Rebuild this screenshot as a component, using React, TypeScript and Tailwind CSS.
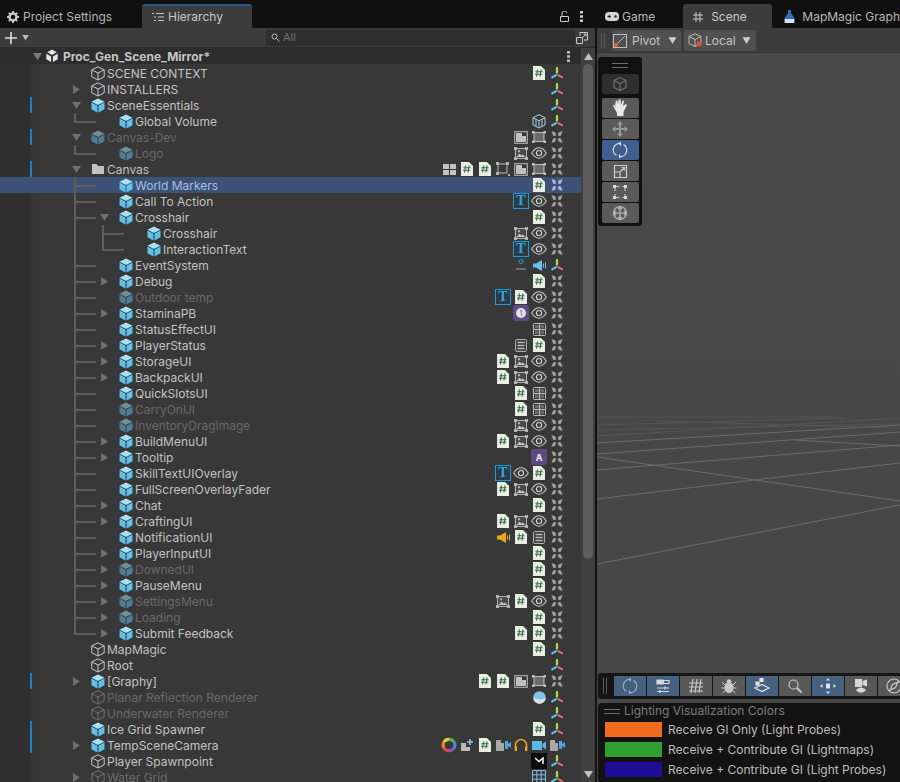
import { ReactNode } from 'react';

type Slot = keyof typeof slotIcons | null;

interface TreeRow {
    name: string;
    depth?: 0 | 1 | 2;
    arrow?: 'right' | 'down';
    icon?: 'box' | 'prefab' | 'folder';
    dim?: boolean;
    selected?: boolean;
    changed?: boolean;
    guide?: 'corner' | 'tee' | 'teeDeep' | 'cornerDeep';
    slots?: Slot[];
    gizmo?: 'color' | 'cross' | 'camera';
}

const Hash = () => (
    <svg width="12" height="14" viewBox="0 0 12 14">
        <path d="M0 0H8L12 4V14H0Z" fill="#e8eee4" />
        <path d="M4.5 3.5 3.5 10.5M8 3.5 7 10.5M2.3 5.7H9.6M2 8.3H9.3" stroke="#3f6b46" strokeWidth="1.1" fill="none" />
    </svg>
);
const Eye = () => (
    <svg width="16" height="12" viewBox="0 0 16 12">
        <path d="M.7 6C3 2.4 5.3.8 8 .8S13 2.4 15.3 6C13 9.6 10.7 11.2 8 11.2S3 9.6.7 6Z" fill="none" stroke="#c8c8c8" strokeWidth="1.1" />
        <circle cx="8" cy="6" r="2.6" fill="none" stroke="#c8c8c8" strokeWidth="1.3" />
    </svg>
);
const ImageIcon = () => (
    <svg width="14" height="13" viewBox="0 0 14 13">
        <rect x="1.5" y="1.5" width="11" height="10" fill="#4a4a4a" stroke="#b4b4b4" />
        <path d="M2.5 10 5.5 6.5 7.5 8.5 9 7.5 11.5 10Z" fill="#c0c0c0" />
        <circle cx="5" cy="4.3" r="1.1" fill="#c0c0c0" />
        <path d="M0 0H3V3H0ZM11 0H14V3H11ZM0 10H3V13H0ZM11 10H14V13H11Z" fill="#b4b4b4" />
    </svg>
);
const TextIcon = () => (
    <div className="flex h-4 w-4 items-center justify-center border border-[#1e9ad6] bg-[#2d3a42] font-['Liberation_Serif',serif] text-[14px] leading-none font-bold text-[#29a8e4]">
        T
    </div>
);
const GridIcon = () => (
    <svg width="13" height="13" viewBox="0 0 13 13" fill="none" stroke="#bcbcbc">
        <rect x=".5" y=".5" width="12" height="12" rx="1" />
        <path d="M6.500 1V12M1 6.500H12" strokeWidth="1.200" />
        <path d="M2 2H5.500V5.500H2ZM7.500 2H11V5.500H7.500ZM2 7.500H5.500V11H2ZM7.500 7.500H11V11H7.500Z" fill="#6a6a6a" stroke="none" />
    </svg>
);
const Tiles = () => (
    <svg width="13" height="11" viewBox="0 0 13 11">
        <path d="M0 0H6V5H0ZM7 0H13V5H7ZM0 6H6V11H0ZM7 6H13V11H7Z" fill="#c4c4c4" />
    </svg>
);
const RectTransform = () => (
    <svg width="14" height="14" viewBox="0 0 14 14">
        <path d="M2 2H11V11H2Z" fill="none" stroke="#c0c0c0" />
        <path d="M0 0H3V3H0ZM10 0H13V3H10ZM0 10H3V13H0ZM12 12H14V14H12Z" fill="#b4b4b4" />
    </svg>
);
const CanvasGroup = () => (
    <svg width="14" height="13" viewBox="0 0 14 13">
        <rect x=".7" y=".7" width="12.6" height="11.6" fill="none" stroke="#c0c0c0" />
        <path d="M2 2H8V5H12V11H2Z" fill="#c0c0c0" />
    </svg>
);
const CanvasRect = () => (
    <svg width="14" height="12" viewBox="0 0 14 12">
        <rect x="2" y="1.5" width="10" height="9" fill="#6a6a6a" stroke="#c0c0c0" />
        <path d="M0 0H2.5V2.5H0ZM11.5 0H14V2.5H11.5ZM0 9.500H2.5V12H0ZM11.5 9.500H14V12H11.5Z" fill="#c0c0c0" />
    </svg>
);
const ListIcon = () => (
    <svg width="12" height="13" viewBox="0 0 12 13">
        <rect x=".6" y=".6" width="10.800" height="11.800" rx="1" fill="none" stroke="#bcbcbc" />
        <path d="M2.500 3.500H9.500M2.500 6.500H9.500M2.500 9.500H9.500" stroke="#bcbcbc" strokeWidth="1.300" />
    </svg>
);
const PurpleClock = () => (
    <div className="flex h-4 w-4 items-center justify-center rounded-[2px] bg-[#5e4a7e]">
        <div className="flex h-[10px] w-[10px] items-center justify-center rounded-full bg-[#e4e4e4] text-[7px] leading-none text-[#5e4a7e]">
            1
        </div>
    </div>
);
const PurpleA = () => (
    <div className="flex h-4 w-4 items-center justify-center rounded-[2px] bg-[#5e4a7e] text-[9px] leading-none font-bold text-[#eeeeee]">
        A
    </div>
);
const Speaker = ({ color }: { color: string }) => (
    <svg width="15" height="13" viewBox="0 0 15 13">
        <path d="M1 4.500H4L10 1V12L4 8.500H1Z" fill={color} />
        <path d="M11.500 4.500V8.500M13.500 3.500V9.500" stroke={color} strokeWidth="1" />
    </svg>
);
const EventSystemIcon = () => (
    <svg width="14" height="14" viewBox="0 0 14 14">
        <circle cx="7" cy="3.500" r="2" fill="none" stroke="#2a86c8" strokeWidth="1.200" />
        <path d="M2 11H12" stroke="#6a6a6a" strokeWidth="2" />
    </svg>
);
const VolumeCube = () => (
    <svg width="14" height="15" viewBox="0 0 14 15" fill="none" stroke="#a9cfe4" strokeWidth="1">
        <path d="M7 .7 13 3.700V11L7 14 1 11V3.700Z" />
        <path d="M1 3.700 7 6.700 13 3.700M7 6.700V14M4 5V12.500M10 5V12.500" />
    </svg>
);
const Sphere = () => (
    <svg width="13" height="13" viewBox="0 0 13 13">
        <circle cx="6.500" cy="6.500" r="6.200" fill="#7fc7e8" />
        <path d="M.3 6.500C3 9 10 9 12.700 6.500A6.200 6.200 0 0 1 .3 6.500Z" fill="#e0e0e0" />
    </svg>
);
const ColorWheel = () => (
    <svg width="16" height="16" viewBox="0 0 16 16" fill="none" strokeWidth="3.200">
        <path d="M8 2.400A5.600 5.600 0 0 1 13 5" stroke="#58b34a" />
        <path d="M13 5A5.600 5.600 0 0 1 13 11" stroke="#3d8fd6" />
        <path d="M13 11A5.600 5.600 0 0 1 8 13.600" stroke="#8a58c8" />
        <path d="M8 13.600A5.600 5.600 0 0 1 3 11" stroke="#d8484a" />
        <path d="M3 11A5.600 5.600 0 0 1 3 5" stroke="#e8862e" />
        <path d="M3 5A5.600 5.600 0 0 1 8 2.400" stroke="#e8cf3a" />
    </svg>
);
const AddComponent = () => (
    <svg width="14" height="14" viewBox="0 0 14 14">
        <path d="M1 5H6V9H10V13H1Z" fill="#b8b8b8" />
        <path d="M10 1V7M7 4H13" stroke="#8cc8e8" strokeWidth="1.600" />
    </svg>
);
const ScriptCamera = () => (
    <svg width="15" height="13" viewBox="0 0 15 13">
        <path d="M0 1H5V4H8V12H0Z" fill="#a8a8a8" />
        <path d="M9 2H12V10H9ZM12 5 15 3V9L12 7Z" fill="#4ea6dc" />
    </svg>
);
const Headphones = () => (
    <svg width="14" height="14" viewBox="0 0 14 14" fill="none">
        <path d="M1.500 10V7A5.500 5.500 0 0 1 12.500 7V10" stroke="#e8aa1e" strokeWidth="1.500" />
        <path d="M.7 8.500H3V13H.7ZM11 8.500H13.300V13H11Z" fill="#e8aa1e" />
    </svg>
);
const CameraIcon = () => (
    <svg width="14" height="11" viewBox="0 0 14 11">
        <path d="M0 1H10V10H0ZM10.500 4 14 1.500V9.500L10.500 7Z" fill="#58b8e8" />
    </svg>
);
const SpawnBadge = () => (
    <div className="flex h-4 w-4 items-center justify-center bg-[#0c0c0c]">
        <svg width="10" height="8" viewBox="0 0 10 8">
            <path d="M1 1 5 4.500 9 1V7" fill="none" stroke="#f0f0f0" strokeWidth="1.600" />
        </svg>
    </div>
);
const BlueGrid = () => (
    <svg width="14" height="14" viewBox="0 0 14 14" fill="none" stroke="#7fbfe4">
        <path d="M.5.500H13.500V13.500H.5ZM4.800.500V13.500M9.200.500V13.500M.5 4.800H13.500M.5 9.200H13.500" />
    </svg>
);

const slotIcons = {
    hash: <Hash />,
    eye: <Eye />,
    image: <ImageIcon />,
    text: <TextIcon />,
    grid: <GridIcon />,
    tiles: <Tiles />,
    rect: <RectTransform />,
    group: <CanvasGroup />,
    canvas: <CanvasRect />,
    list: <ListIcon />,
    clock: <PurpleClock />,
    purpleA: <PurpleA />,
    speakerBlue: <Speaker color="#6cc0ea" />,
    speakerYellow: <Speaker color="#e8aa1e" />,
    events: <EventSystemIcon />,
    volume: <VolumeCube />,
    sphere: <Sphere />,
    wheel: <ColorWheel />,
    add: <AddComponent />,
    csCamera: <ScriptCamera />,
    headphones: <Headphones />,
    camera: <CameraIcon />,
    spawn: <SpawnBadge />,
    blueGrid: <BlueGrid />,
};

const rows: TreeRow[] = [
    { name: 'SCENE CONTEXT', icon: 'box', slots: ['hash'], gizmo: 'color' },
    { name: 'INSTALLERS', icon: 'box', arrow: 'right', gizmo: 'color' },
    { name: 'SceneEssentials', arrow: 'down', changed: true, gizmo: 'color' },
    { name: 'Global Volume', depth: 1, guide: 'corner', slots: ['volume'], gizmo: 'color' },
    { name: 'Canvas-Dev', arrow: 'down', dim: true, changed: true, slots: ['group', 'canvas'] },
    { name: 'Logo', depth: 1, dim: true, guide: 'corner', slots: ['image', 'eye'] },
    { name: 'Canvas', arrow: 'down', icon: 'folder', changed: true, slots: ['tiles', 'hash', 'hash', 'rect', 'group', 'canvas'] },
    { name: 'World Markers', depth: 1, guide: 'tee', selected: true, slots: ['hash'] },
    { name: 'Call To Action', depth: 1, guide: 'tee', slots: ['text', 'eye'] },
    { name: 'Crosshair', depth: 1, guide: 'tee', arrow: 'down', slots: ['hash'] },
    { name: 'Crosshair', depth: 2, guide: 'teeDeep', slots: ['image', 'eye'] },
    { name: 'InteractionText', depth: 2, guide: 'cornerDeep', slots: ['text', 'eye'] },
    { name: 'EventSystem', depth: 1, guide: 'tee', slots: ['events', 'speakerBlue'], gizmo: 'color' },
    { name: 'Debug', depth: 1, guide: 'tee', arrow: 'right', slots: ['hash'] },
    { name: 'Outdoor temp', depth: 1, guide: 'tee', dim: true, slots: ['text', 'hash', 'eye'] },
    { name: 'StaminaPB', depth: 1, guide: 'tee', arrow: 'right', slots: ['clock', 'eye'] },
    { name: 'StatusEffectUI', depth: 1, guide: 'tee', slots: ['grid'] },
    { name: 'PlayerStatus', depth: 1, guide: 'tee', arrow: 'right', slots: ['list', 'hash'] },
    { name: 'StorageUI', depth: 1, guide: 'tee', arrow: 'right', slots: ['hash', 'image', 'eye'] },
    { name: 'BackpackUI', depth: 1, guide: 'tee', arrow: 'right', slots: ['hash', 'image', 'eye'] },
    { name: 'QuickSlotsUI', depth: 1, guide: 'tee', slots: ['hash', 'grid'] },
    { name: 'CarryOnUI', depth: 1, guide: 'tee', dim: true, slots: ['hash', 'grid'] },
    { name: 'InventoryDragImage', depth: 1, guide: 'tee', dim: true, slots: ['image', 'eye'] },
    { name: 'BuildMenuUI', depth: 1, guide: 'tee', arrow: 'right', slots: ['hash', 'image', 'eye'] },
    { name: 'Tooltip', depth: 1, guide: 'tee', arrow: 'right', slots: ['purpleA'] },
    { name: 'SkillTextUIOverlay', depth: 1, guide: 'tee', slots: ['text', 'eye', 'hash'] },
    { name: 'FullScreenOverlayFader', depth: 1, guide: 'tee', slots: ['hash', 'image', 'eye'] },
    { name: 'Chat', depth: 1, guide: 'tee', arrow: 'right', slots: ['hash'] },
    { name: 'CraftingUI', depth: 1, guide: 'tee', arrow: 'right', slots: ['hash', 'image', 'eye'] },
    { name: 'NotificationUI', depth: 1, guide: 'tee', slots: ['speakerYellow', 'hash', 'list'] },
    { name: 'PlayerInputUI', depth: 1, guide: 'tee', arrow: 'right', slots: ['hash'] },
    { name: 'DownedUI', depth: 1, guide: 'tee', arrow: 'right', dim: true, slots: ['hash'] },
    { name: 'PauseMenu', depth: 1, guide: 'tee', arrow: 'right', slots: ['hash'] },
    { name: 'SettingsMenu', depth: 1, guide: 'tee', arrow: 'right', dim: true, slots: ['image', 'hash', 'eye'] },
    { name: 'Loading', depth: 1, guide: 'tee', arrow: 'right', dim: true, slots: ['hash'] },
    { name: 'Submit Feedback', depth: 1, guide: 'corner', arrow: 'right', slots: ['hash', 'hash'] },
    { name: 'MapMagic', icon: 'box', slots: ['hash'], gizmo: 'color' },
    { name: 'Root', icon: 'box', gizmo: 'color' },
    { name: '[Graphy]', arrow: 'right', changed: true, slots: ['hash', 'hash', 'group', 'canvas'] },
    { name: 'Planar Reflection Renderer', icon: 'box', dim: true, slots: ['sphere'], gizmo: 'color' },
    { name: 'Underwater Renderer', icon: 'box', dim: true, gizmo: 'color' },
    { name: 'Ice Grid Spawner', changed: true, slots: ['hash'], gizmo: 'color' },
    { name: 'TempSceneCamera', arrow: 'right', changed: true, slots: ['wheel', 'add', 'hash', 'csCamera', 'headphones', 'camera'], gizmo: 'camera' },
    { name: 'Player Spawnpoint', icon: 'box', slots: ['spawn'], gizmo: 'color' },
    { name: 'Water Grid', icon: 'box', arrow: 'right', dim: true, slots: ['blueGrid'], gizmo: 'color' },
];

const BoxIcon = ({ dim }: { dim?: boolean }) => (
    <svg width="14" height="15" viewBox="0 0 14 15" fill="none" stroke="#c9c9c9" strokeWidth="1" className={dim ? 'opacity-40' : ''}>
        <path d="M7 .8 13.200 3.800V10.800L7 14 .8 10.800V3.800Z" />
        <path d="M.8 3.800 7 7 13.200 3.800M7 7V14" />
    </svg>
);
const PrefabIcon = ({ dim }: { dim?: boolean }) => (
    <svg width="14" height="15" viewBox="0 0 14 15" className={dim ? 'opacity-50' : ''}>
        <path d="M7 .5 13.500 3.700 7 6.900.5 3.700Z" fill="#a6e2f8" />
        <path d="M.5 4.600 6.500 7.700V14.500L.5 11.200Z" fill="#5fc3ec" />
        <path d="M13.500 4.600 7.500 7.700V14.500L13.500 11.200Z" fill="#5fc3ec" />
    </svg>
);
const FolderIcon = () => (
    <svg width="14" height="12" viewBox="0 0 14 12">
        <path d="M1 1H5.500L7 3H13V11H1Z" fill="#c2c2c2" />
    </svg>
);
const ColorGizmo = () => (
    <svg width="14" height="15" viewBox="0 0 14 15" strokeLinecap="round" fill="none">
        <path d="M7 1.500V6.500M5.800 9.200 2.300 11.300M8.500 9.200 12 11.300" stroke="#2b2b2b" strokeWidth="4" opacity="0.45" />
        <path d="M7 2V6.500" stroke="#a8d84e" strokeWidth="2.400" />
        <path d="M5.800 9.200 2.300 11.300" stroke="#5cb8e6" strokeWidth="2.400" />
        <path d="M8.500 9.200 12 11.300" stroke="#d86464" strokeWidth="2.400" />
    </svg>
);
const CrossGizmo = ({ selected }: { selected?: boolean }) => (
    <svg width="14" height="14" viewBox="0 0 14 14" fill={selected ? '#a8bddb' : '#a4a4a4'}>
        <path d="M1.500 1 5.500 2.500 6 6 3 5.500ZM12.500 1 8.500 2.500 8 6 11 5.500ZM1.500 13 5.500 11.500 6 8 3 8.500ZM12.500 13 8.500 11.500 8 8 11 8.500Z" />
    </svg>
);

const Caret = ({ dir, className = '' }: { dir: 'right' | 'down' | 'up'; className?: string }) => {
    const d = dir === 'right' ? 'M1 0 8 4.500 1 9Z' : dir === 'down' ? 'M0 1H9L4.500 8Z' : 'M0 8H9L4.500 1Z';
    return (
        <svg width="9" height="9" viewBox="0 0 9 9" className={className}>
            <path d={d} fill="currentColor" />
        </svg>
    );
};

// Tree guide lines sit over the row, they don't take part in its flow
const Guide = ({ kind }: { kind: TreeRow['guide'] }) => {
    if (kind === 'corner')
        return (
            <>
                <span className="absolute top-0 left-[74px] h-[10px] w-[2px] bg-[#5e5e5e]" />
                <span className="absolute top-2 left-[74px] h-[2px] w-[22px] bg-[#5e5e5e]" />
            </>
        );
    if (kind === 'tee')
        return (
            <>
                <span className="absolute top-0 left-[74px] h-4 w-[2px] bg-[#5e5e5e]" />
                <span className="absolute top-2 left-[74px] h-[2px] w-[22px] bg-[#5e5e5e]" />
            </>
        );
    return (
        <>
            <span className="absolute top-0 left-[74px] h-4 w-[2px] bg-[#5e5e5e]" />
            <span className={`absolute top-0 left-[102px] w-[2px] bg-[#5e5e5e] ${kind === 'teeDeep' ? 'h-4' : 'h-[10px]'}`} />
            <span className="absolute top-2 left-[102px] h-[2px] w-[22px] bg-[#5e5e5e]" />
        </>
    );
};

const Row = ({ row }: { row: TreeRow }) => {
    const depth = row.depth ?? 0;
    const indent = depth === 0 ? 'pl-[72px]' : depth === 1 ? 'pl-[100px]' : 'pl-[128px]';
    const slots = row.slots ?? [];
    return (
        <div className={`relative flex h-4 shrink-0 items-center ${indent} ${row.selected ? 'bg-[#3c5277]' : ''}`}>
            {row.guide && <Guide kind={row.guide} />}
            {row.changed && <span className="absolute top-0 left-[30px] h-4 w-[2px] bg-[#1b80c4]" />}
            <div className="flex w-[19px] shrink-0 items-center text-[#6f6f6f]">
                {row.arrow && <Caret dir={row.arrow} />}
            </div>
            <div className="flex w-[14px] shrink-0 items-center justify-center">
                {row.icon === 'box' && <BoxIcon dim={row.dim} />}
                {row.icon === 'folder' && <FolderIcon />}
                {(!row.icon || row.icon === 'prefab') && <PrefabIcon dim={row.dim} />}
            </div>
            <span className={`mt-px ml-[2px] text-[12px] leading-4 whitespace-nowrap ${row.dim ? 'text-[#696969]' : row.selected ? 'text-[#a9bfe0]' : 'text-[#c2c2c2]'}`}>
                {row.name}
            </span>
            <div className="ml-auto flex items-center pr-[15px]">
                {slots.map((s, i) => (
                    <div key={i} className="flex h-4 w-[18px] items-center justify-center">
                        {s && slotIcons[s]}
                    </div>
                ))}
                <div className="flex h-4 w-[18px] items-center justify-center">
                    {row.gizmo === 'color' && <ColorGizmo />}
                    {row.gizmo === 'camera' && <ScriptCamera />}
                    {!row.gizmo && <CrossGizmo selected={row.selected} />}
                </div>
            </div>
        </div>
    );
};

const ToolButton = ({ active, children }: { active?: boolean; children: ReactNode }) => (
    <div className={`flex h-5 w-[37px] items-center justify-center rounded-[2px] ${active ? 'bg-[#3e5f8f]' : 'bg-[#5a5a5a]'}`}>
        {children}
    </div>
);

const Stroke = ({ children, color = '#d8d8d8' }: { children: ReactNode; color?: string }) => (
    <svg width="18" height="18" viewBox="0 0 18 18" fill="none" stroke={color} strokeWidth="1.200">
        {children}
    </svg>
);

const RotateGlyph = ({ color = '#e4e4e4' }: { color?: string }) => (
    <Stroke color={color}>
        <path d="M10 2.500A6.500 6.500 0 0 0 5.500 14.500M8 15.500A6.500 6.500 0 0 0 12.500 3.500" />
        <path d="M10 .5V5L7.500 2.500ZM8 17.500V13L10.500 15.500Z" fill={color} stroke="none" />
    </Stroke>
);

const BarButton = ({ active, children }: { active?: boolean; children: ReactNode }) => (
    <div className={`flex h-5 w-8 shrink-0 items-center justify-center ${active ? 'bg-[#46607f]' : 'bg-[#585858]'}`}>
        {children}
    </div>
);

const legend = [
    { label: 'Receive GI Only (Light Probes)', color: 'bg-[#ee6b1f]' },
    { label: 'Receive + Contribute GI (Lightmaps)', color: 'bg-[#2f9f30]' },
    { label: 'Receive + Contribute GI (Light Probes)', color: 'bg-[#200d96]' },
];

export default function App() {
    return (
        <div className="flex h-[782px] w-[900px] overflow-hidden bg-[#101010] font-['Inter',sans-serif] text-[12px] text-[#c4c4c4]">
            {/* Hierarchy panel */}
            <div className="flex w-[595px] shrink-0 flex-col">
                <div className="flex h-7 shrink-0 items-end bg-[#101010]">
                    <div className="flex h-6 w-[142px] items-center gap-[4px] pt-px pl-[7px] text-[#b4b4b4]">
                        <svg width="12" height="12" viewBox="0 0 12 12">
                            <circle cx="6" cy="6" r="3.500" fill="none" stroke="#c8c8c8" strokeWidth="2.400" />
                            <path d="M6 0V12M0 6H12M1.800 1.800 10.200 10.200M10.200 1.800 1.800 10.200" stroke="#c8c8c8" strokeWidth="1.800" strokeDasharray="2 8 2 0" />
                        </svg>
                        Project Settings
                    </div>
                    <div className="flex h-6 w-[110px] items-center gap-[4px] rounded-t-[3px] border-t-2 border-[#27588a] bg-[#3c3c3c] pl-[10px] text-[#c8c8c8]">
                        <svg width="12" height="10" viewBox="0 0 12 10" stroke="#c8c8c8">
                            <path d="M0 1.500H2M4 1.500H12M2 5H4M6 5H12M2 8.500H4M6 8.500H12" />
                        </svg>
                        Hierarchy
                    </div>
                    <div className="ml-auto flex h-6 items-center gap-[11px] pr-[12px]">
                        <svg width="9" height="11" viewBox="0 0 9 11" fill="none" stroke="#cccccc">
                            <path d="M.5 5.500H8.500V10.500H.5ZM2 5.500V3A2.500 2.500 0 0 1 7 2" />
                        </svg>
                        <svg width="3" height="11" viewBox="0 0 3 11" fill="#cccccc">
                            <path d="M0 0H3V2.500H0ZM0 4.200H3V6.700H0ZM0 8.400H3V11H0Z" />
                        </svg>
                    </div>
                </div>
                <div className="flex h-5 shrink-0 items-center border-b border-[#2a2a2a] bg-[#3c3c3c] pl-[5px]">
                    <svg width="12" height="12" viewBox="0 0 12 12" stroke="#dddddd" strokeWidth="1.600">
                        <path d="M6 0V12M0 6H12" />
                    </svg>
                    <Caret dir="down" className="ml-[4px] scale-75 text-[#bdbdbd]" />
                    <div className="ml-[236px] flex h-4 w-[309px] items-center gap-[3px] bg-[#2e2e2e] pl-[5px] text-[11px] text-[#737373]">
                        <svg width="9" height="9" viewBox="0 0 9 9" fill="none" stroke="#bdbdbd">
                            <circle cx="3.500" cy="3.500" r="2.500" />
                            <path d="M5.500 5.500 8.500 8.500" />
                        </svg>
                        All
                    </div>
                    <div className="ml-[1px] flex h-4 w-[16px] items-center">
                        <svg width="12" height="12" viewBox="0 0 12 12" fill="none" stroke="#c8c8c8">
                            <path d="M.5 5.500H6.500V11.500H.5ZM4 4V.5H11.500V8H8M6.500 5.500 10 2M7.500 2H10V4.500" />
                        </svg>
                    </div>
                </div>
                <div className="flex min-h-0 flex-1">
                    <div className="flex min-w-0 flex-1 flex-col">
                        <div className="flex h-4 shrink-0 items-center bg-[#2d2d2d] pl-[33px]">
                            <Caret dir="down" className="text-[#7b7b7b]" />
                            <svg width="14" height="14" viewBox="0 0 14 14" className="ml-[3px]">
                                <path d="M7 .5 12.700 3.800V10.200L7 13.500 1.300 10.200V3.800Z" fill="#e4e4e4" />
                                <path d="M7 7V14M7 7 1 3.500M7 7 13 3.500" stroke="#2d2d2d" strokeWidth="1.800" />
                            </svg>
                            <span className="mt-px ml-[4px] font-bold text-[#c6c6c6]">Proc_Gen_Scene_Mirror*</span>
                            <svg width="3" height="11" viewBox="0 0 3 11" fill="#bdbdbd" className="mr-[11px] ml-auto">
                                <path d="M0 0H3V2.500H0ZM0 4.200H3V6.700H0ZM0 8.400H3V11H0Z" />
                            </svg>
                        </div>
                        <div className="flex min-h-0 flex-1 flex-col overflow-hidden bg-[linear-gradient(90deg,#2f2f2f_0,#2f2f2f_28px,#383838_34px,#383838_100%)] pt-px">
                            {rows.map((row, i) => (
                                <Row key={i} row={row} />
                            ))}
                        </div>
                    </div>
                    {/* Scrollbar */}
                    <div className="flex w-[14px] shrink-0 flex-col items-center bg-[#3f3f3f]">
                        <Caret dir="up" className="mt-[4px] h-[9px] shrink-0 text-[#c0c0c0]" />
                        <div className="mt-[3px] h-[495px] w-[10px] shrink-0 rounded-[5px] bg-[#5d5d5d]" />
                        <Caret dir="down" className="mt-auto mb-[3px] text-[#c0c0c0]" />
                    </div>
                </div>
            </div>
            <div className="w-[2px] shrink-0 bg-[#111111]" />

            {/* Scene panel */}
            <div className="flex min-w-0 flex-1 flex-col">
                <div className="flex h-7 shrink-0 items-end bg-[#101010] pl-[8px]">
                    <div className="flex h-6 w-[79px] items-center gap-[3px] pt-px text-[#b8b8b8]">
                        <svg width="14" height="9" viewBox="0 0 14 9">
                            <rect width="14" height="9" rx="4" fill="#d4d4d4" />
                            <path d="M2.500 4.500H6M4.200 2.800V6.200" stroke="#222222" />
                            <circle cx="10.500" cy="4.500" r="1.200" fill="#222222" />
                        </svg>
                        Game
                    </div>
                    <div className="flex h-6 w-[90px] items-center gap-[8px] rounded-t-[3px] bg-[#3c3c3c] pt-px pl-[10px] text-[#c8c8c8]">
                        <svg width="10" height="10" viewBox="0 0 10 10" stroke="#c8c8c8">
                            <path d="M3 0V10M7 0V10M0 3H10M0 7H10" />
                        </svg>
                        Scene
                    </div>
                    <div className="flex h-6 items-center gap-[7px] pt-px pl-[12px] whitespace-nowrap text-[#b8b8b8]">
                        <svg width="11" height="13" viewBox="0 0 11 13">
                            <path d="M4 0H7V3L11 9V13H0V9L4 3Z" fill="#3a6ab0" />
                            <path d="M1 9H10V13H1Z" fill="#d8e4f0" />
                        </svg>
                        MapMagic Graph
                    </div>
                </div>
                <div className="flex h-[25px] shrink-0 items-center border-b border-[#333333] bg-[#3c3c3c] pt-px pl-[4px]">
                    <div className="h-4 w-[4px] border-x border-[#5a5a5a]" />
                    <div className="ml-[7px] flex h-[21px] w-[69px] items-center rounded-[2px] bg-[#505050] pl-[1px] text-[#c4c4c4]">
                        <svg width="14" height="14" viewBox="0 0 14 14" fill="none">
                            <rect x=".5" y=".5" width="13" height="13" stroke="#bdbdbd" />
                            <path d="M3 11 12 2" stroke="#bdbdbd" />
                            <circle cx="3" cy="11" r="2.200" fill="#d8622c" />
                        </svg>
                        <span className="ml-[5px]">Pivot</span>
                        <Caret dir="down" className="ml-[8px] scale-90 text-[#d0d0d0]" />
                    </div>
                    <div className="ml-[3px] flex h-[21px] w-[72px] items-center rounded-[2px] bg-[#505050] pl-[4px] text-[#c4c4c4]">
                        <svg width="15" height="15" viewBox="0 0 15 15" fill="none" stroke="#bdbdbd">
                            <path d="M7 .8 13 3.500V10.500L7 13.500 1 10.500V3.500ZM1 3.500 7 6.500 13 3.500M7 6.500V13.500" />
                            <circle cx="11" cy="11" r="2.700" fill="#d84c3c" stroke="none" />
                        </svg>
                        <span className="ml-[2px]">Local</span>
                        <Caret dir="down" className="ml-[6px] scale-90 text-[#d0d0d0]" />
                    </div>
                </div>
                <div className="relative min-h-0 flex-1 overflow-hidden bg-[linear-gradient(180deg,#4a4a4a_0,#474747_50%,#474747_100%)]">
                    {/* Ground grid */}
                    <svg width="303" height="200" viewBox="0 0 303 200" className="absolute top-[327px] left-0" stroke="#6c6c6c" strokeWidth="1" fill="none">
                        <path d="M0 184 303 125M0 119 157 100 303 83M0 77 303 121M0 90 303 65M0 74 303 52M0 63 303 45M197 60 303 66" />
                        <path d="M0 56 303 38M0 50 303 44M0 45 250 38M60 41 303 48M0 37 240 37" stroke="#555555" />
                    </svg>

                    {/* Tool palette */}
                    <div className="absolute top-[4px] left-[1px] flex w-[44px] flex-col items-center rounded-[3px] bg-[#111111] pb-[3px]">
                        <div className="flex h-[17px] flex-col justify-center gap-[3px]">
                            <span className="h-px w-4 bg-[#6e6e6e]" />
                            <span className="h-px w-4 bg-[#6e6e6e]" />
                        </div>
                        <div className="flex h-5 w-[37px] items-center justify-center rounded-[2px] bg-[#2e2e2e]">
                            <Stroke color="#6e6e6e">
                                <path d="M9 2.500 15 5.500V12.500L9 15.500 3 12.500V5.500ZM3 5.500 9 8.500 15 5.500M9 8.500V15.500" />
                            </Stroke>
                        </div>
                        <div className="mt-[4px] flex flex-col gap-px">
                            <ToolButton>
                                <svg width="16" height="18" viewBox="0 0 16 18" fill="#e8e8e8">
                                    <path d="M3 6 4 1.500 5.500 2 6 6 6.500.5H8.500L9 6 10.500 1.500 12 2 11 7.500 13.500 5 15 6 11.500 13V17H5V14L1 6.500 2 5.500 4 9Z" />
                                </svg>
                            </ToolButton>
                            <ToolButton>
                                <svg width="18" height="18" viewBox="0 0 18 18" fill="#9a9a9a">
                                    <path d="M9 1 12 4.500H6ZM9 17 6 13.500H12ZM1 9 4.500 6V12ZM17 9 13.500 12V6Z" />
                                    <path d="M8 4H10V14H8ZM4 8H14V10H4Z" />
                                </svg>
                            </ToolButton>
                            <ToolButton active>
                                <RotateGlyph />
                            </ToolButton>
                            <ToolButton>
                                <Stroke color="#cfcfcf">
                                    <path d="M3.500 3.500H15.500V15.500H3.500ZM3.500 10H9V15.500M9 10 13.500 5.500M10.500 5.500H13.500V8.500" />
                                </Stroke>
                            </ToolButton>
                            <ToolButton>
                                <svg width="18" height="18" viewBox="0 0 18 18">
                                    <path d="M4 3V15M14 3V15M3.500 3.500H14.500M3.500 14.500H14.500" stroke="#d0d0d0" strokeDasharray="5 3" fill="none" />
                                    <path d="M2 2H5V5H2ZM13 2H16V5H13ZM2 13H5V16H2ZM13 13H16V16H13Z" fill="#d8d8d8" />
                                </svg>
                            </ToolButton>
                            <ToolButton>
                                <Stroke color="#bdbdbd">
                                    <circle cx="9" cy="9" r="6.500" />
                                    <path d="M9 3V15M3 9H15" />
                                    <path d="M7 5 9 3 11 5M7 13 9 15 11 13M5 7 3 9 5 11M13 7 15 9 13 11" />
                                </Stroke>
                            </ToolButton>
                        </div>
                    </div>

                    {/* Bottom overlays */}
                    <div className="absolute top-[620px] left-[1px] flex h-[26px] w-[305px] items-center gap-px rounded-l-[3px] bg-[#151515] pl-[16px]">
                        <span className="absolute top-[5px] left-[5px] h-4 w-[4px] border-x border-[#5a5a5a]" />
                        <BarButton active>
                            <RotateGlyph color="#9fb2c8" />
                        </BarButton>
                        <BarButton active>
                            <Stroke>
                                <path d="M3 3H9V7H3Z" fill="#d8d8d8" />
                                <path d="M9.500 3.500H15V6.500H9.500ZM3 11H15M3 14.500H15M11 9.500V12.500M6 13V16" />
                            </Stroke>
                        </BarButton>
                        <BarButton>
                            <Stroke color="#c8c8c8">
                                <path d="M6 2 4 16M10 2 8 16M14 2 12 16M2 6H16M2 10H16M2 14H16" />
                            </Stroke>
                        </BarButton>
                        <BarButton>
                            <svg width="16" height="16" viewBox="0 0 16 16" fill="#c8c8c8">
                                <ellipse cx="8" cy="9.500" rx="4.500" ry="5.500" />
                                <circle cx="8" cy="3.500" r="2.300" />
                                <path d="M1 4 4 7M15 4 12 7M.5 10H4M15.500 10H12M1.500 15 4.500 12.500M14.500 15 11.500 12.500" stroke="#c8c8c8" />
                            </svg>
                        </BarButton>
                        <BarButton active>
                            <Stroke color="#e0e0e0">
                                <path d="M9 7.500 16 11 9 14.500 2 11Z" />
                                <path d="M7 1.500H10V4.500H7Z" fill="#e0e0e0" />
                                <path d="M3 5H6V8H3Z" fill="#e0e0e0" />
                            </Stroke>
                        </BarButton>
                        <BarButton>
                            <Stroke color="#c8c8c8">
                                <circle cx="7.500" cy="7.500" r="4.500" />
                                <path d="M11 11 15.500 15.500" strokeWidth="2" />
                            </Stroke>
                        </BarButton>
                        <BarButton active>
                            <svg width="18" height="18" viewBox="0 0 18 18" fill="#d8e4f0">
                                <path d="M7 6.500H11V11.500H7ZM9 1 11 3.500H7ZM9 17 7 14.500H11ZM1 9 3.500 7V11ZM17 9 14.500 11V7Z" />
                            </svg>
                        </BarButton>
                        <BarButton>
                            <svg width="18" height="18" viewBox="0 0 18 18" fill="#d8d8d8">
                                <path d="M3 2H10V10H3ZM10.500 4 15 2.500V9.500L10.500 8Z" />
                                <path d="M4 13C7 9.500 11 9.500 14 13 11 16.500 7 16.500 4 13Z" />
                            </svg>
                        </BarButton>
                        <BarButton>
                            <Stroke color="#c8c8c8">
                                <circle cx="9" cy="9" r="7" />
                                <path d="M13 5 10.500 10.500 5 13 7.500 7.500Z" />
                            </Stroke>
                        </BarButton>
                    </div>
                    <div className="absolute top-[650px] left-[1px] flex h-[80px] w-[305px] flex-col rounded-[4px] bg-[#131313] pl-[6px]">
                        <div className="flex h-[16px] items-center gap-[4px] text-[#7d7d7d]">
                            <div className="flex flex-col gap-[3px]">
                                <span className="h-px w-4 bg-[#6e6e6e]" />
                                <span className="h-px w-4 bg-[#6e6e6e]" />
                            </div>
                            Lighting Visualization Colors
                        </div>
                        <div className="mt-[3px] ml-px flex flex-col gap-[5px]">
                            {legend.map((item) => (
                                <div key={item.label} className="flex h-[15px] items-center gap-[6px] whitespace-nowrap text-[#bdbdbd]">
                                    <span className={`h-[15px] w-[57px] shrink-0 ${item.color}`} />
                                    {item.label}
                                </div>
                            ))}
                        </div>
                    </div>
                </div>
            </div>
        </div>
    );
}
